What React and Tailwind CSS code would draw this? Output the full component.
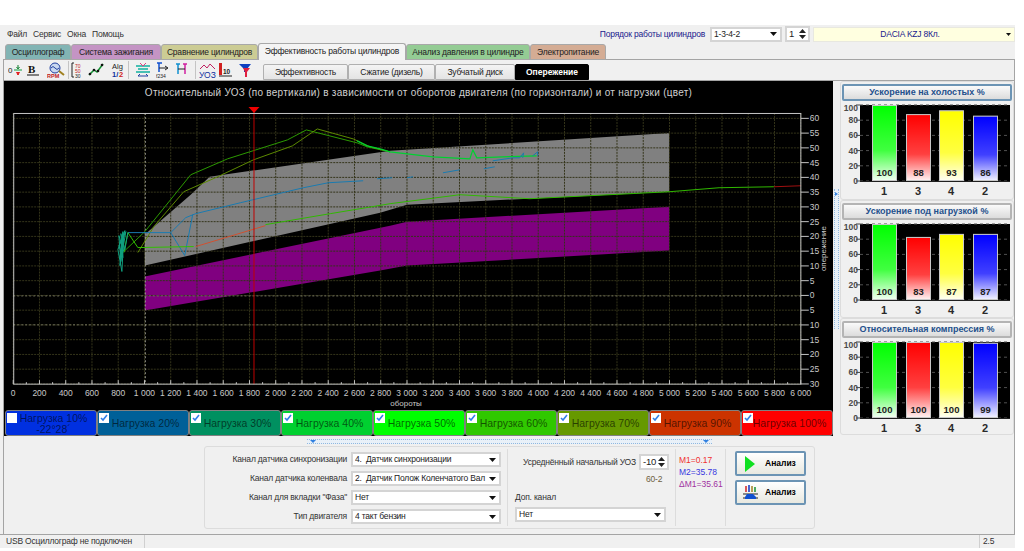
const FONT = "font-['Liberation_Sans',Arial,sans-serif]";

// ── Chart data, in page pixels ───────────────────────────────────────────────
const X0 = 12;
const PX_PER_200 = 26.33;
const Y_ZERO = 296;
const PX_PER_5 = 14.8;

const rpmTicks = Array.from({ length: 31 }, (_, i) => i * 200);
const advanceTicks = Array.from({ length: 19 }, (_, i) => 60 - i * 5);
const xOf = (rpm) => X0 + (rpm / 200) * PX_PER_200;
const yOf = (deg) => Y_ZERO - (deg / 5) * PX_PER_5;
const rpmLabel = (v) => (v >= 1000 ? `${Math.floor(v / 1000)} ${String(v % 1000).padStart(3, '0')}` : String(v));

const GREY_AREA = '144,235 190,195 209,177 390,151 670,133 670,192 407,205 380,213 144,266';
const PURPLE_AREA = '144,277 390,226 407,222 670,207 670,251 407,266 380,271 144,311';

const TRACES = [
  { c: '#2c9a00', p: '123,252 144,232 190,175 227,159 287,140 306,130 357,143 367,147 390,152' },
  { c: '#5c8a00', p: '137,253 153,227 183,192 217,177 253,160 292,146 317,129 353,139 370,147 390,152' },
  { c: '#00d030', p: '357,141 367,146 380,149 390,152 433,157 470,159 473,150 477,158 503,157 537,156', w: 1.2 },
  { c: '#1a7ab0', p: '127,233 170,233 185,218 195,214 240,203 303,188 328,183 363,181' },
  { c: '#1a7ab0', p: '170,233 184,256 192,215' },
  { c: '#1a7ab0', p: '377,179 392,178' },
  { c: '#1a7ab0', p: '407,178 413,177' },
  { c: '#1a7ab0', p: '443,173 460,170' },
  { c: '#1a7ab0', p: '484,169 495,167' },
  { c: '#1a7ab0', p: '493,161 513,158 520,158 524,153 523,158' },
  { c: '#1a7ab0', p: '533,156 538,152 538,156' },
  { c: '#30c000', p: '123,253 127,233 137,248 193,247' },
  { c: '#d05030', p: '195,247 265,226' },
  { c: '#30b800', p: '265,225 330,214 390,204 460,195 530,199 670,192 720,188 775,187' },
  { c: '#a01010', p: '775,187 802,186' },
];

const SQUIGGLE =
  '123,252 118,236 120,262 122,232 119,258 124,231 117,250 121,272 123,233 119,266 125,232 118,246 122,258 120,234 124,250 127,233';

const LOADS = [
  { label: 'Нагрузка 10%', sub: '-22°28´', bg: 'bg-[#0030e0]', empty: true },
  { label: 'Нагрузка 20%', bg: 'bg-[#006098]' },
  { label: 'Нагрузка 30%', bg: 'bg-[#009060]' },
  { label: 'Нагрузка 40%', bg: 'bg-[#00d030]' },
  { label: 'Нагрузка 50%', bg: 'bg-[#00ff00]' },
  { label: 'Нагрузка 60%', bg: 'bg-[#30c800]' },
  { label: 'Нагрузка 70%', bg: 'bg-[#669900]' },
  { label: 'Нагрузка 90%', bg: 'bg-[#cc3300]' },
  { label: 'Нагрузка 100%', bg: 'bg-[#ff0000]' },
];

const TABS = [
  { label: 'Осциллограф', cls: 'w-[66px] h-[16px] bg-[#82b4b4]' },
  { label: 'Система зажигания', cls: 'w-[90px] h-[16px] bg-[#c494c4]' },
  { label: 'Сравнение цилиндров', cls: 'w-[97px] h-[16px] bg-[#cccc94]' },
  { label: 'Эффективность работы цилиндров', cls: 'w-[148px] h-[17px] bg-[#f4f4f4] border-b-0 z-10 pb-[1px]' },
  { label: 'Анализ давления в цилиндре', cls: 'w-[124px] h-[16px] bg-[#94cc94]' },
  { label: 'Электропитание', cls: 'w-[76px] h-[16px] bg-[#d4ac94]' },
];

const SUB_TABS = [
  { label: 'Эффективность', w: 'w-[85px]' },
  { label: 'Сжатие (дизель)', w: 'w-[87px]' },
  { label: 'Зубчатый диск', w: 'w-[80px]' },
  { label: 'Опережение', w: 'w-[74px]', active: true },
];

const BARS = [
  { id: 1, color: '#00ff00', grad: 'g1' },
  { id: 3, color: '#ff0000', grad: 'g3' },
  { id: 4, color: '#ffff00', grad: 'g4' },
  { id: 2, color: '#0000ff', grad: 'g2' },
];

const CARDS = [
  { title: 'Ускорение на холостых %', values: [100, 88, 93, 86], focused: true, h: 'h-[119px]' },
  { title: 'Ускорение под нагрузкой %', values: [100, 83, 87, 87], h: 'h-[118px]' },
  { title: 'Относительная компрессия %', values: [100, 100, 100, 99], h: 'h-[117px]' },
];

// ── Small shared controls ────────────────────────────────────────────────────
function Arrow() {
  return (
    <svg width="7" height="4" viewBox="0 0 7 4" className="shrink-0">
      <path d="M0 0h7L3.5 4z" fill="#111" />
    </svg>
  );
}

function Combo({ text, className = '' }) {
  return (
    <div className={`flex items-center bg-white border-2 border-[#d4d4d4] h-[15px] pl-[2px] pr-[3px] text-[8.5px] tracking-[-0.2px] text-[#222] ${className}`}>
      <span className="flex-1 truncate leading-[11px] whitespace-pre">{text}</span>
      <Arrow />
    </div>
  );
}

function Spin({ value, className = '' }) {
  return (
    <div className={`flex items-center bg-white border-2 border-[#d4d4d4] h-[16px] px-[2px] text-[9.5px] text-[#222] ${className}`}>
      <span className="flex-1 leading-none">{value}</span>
      <svg width="7" height="10" viewBox="0 0 7 10">
        <path d="M0 4L3.500 0L7 4zM0 6h7L3.500 10z" fill="#222" />
      </svg>
    </div>
  );
}

// ── Toolbar icons ────────────────────────────────────────────────────────────
function ToolIcon({ w = 16, children }) {
  return (
    <svg width={w} height="16" viewBox={`0 0 ${w} 16`} className="shrink-0">
      {children}
    </svg>
  );
}

function Toolbar() {
  return (
    <div className="flex items-center w-[248px] pl-[4px] shrink-0">
      <ToolIcon w={15}>
        <text x="0" y="11" fontSize="8" fill="#222">0</text>
        <path d="M6 8h8" stroke="#10a040" />
        <path d="M10 3v3M8.500 5l1.500 2 1.500-2" stroke="#108030" fill="none" />
        <path d="M10 10v3M8.500 10l1.500 3 1.500-3" stroke="#e02020" fill="#e02020" />
      </ToolIcon>
      <div className="w-[4px]" />
      <ToolIcon w={13}>
        <text x="1" y="11" fontSize="11" fontWeight="700" fontFamily="Liberation Serif" fill="#111">B</text>
        <path d="M0 13h12" stroke="#111" />
      </ToolIcon>
      <div className="w-[7px]" />
      <ToolIcon w={18}>
        <circle cx="8" cy="6" r="5" fill="#c8d8f0" stroke="#2040a0" />
        <path d="M4 6q2-3 4 0t4 0" stroke="#2040a0" fill="none" />
        <path d="M12 9l5 4" stroke="#a08020" strokeWidth="2" />
        <text x="0" y="16" fontSize="5.500" fontWeight="700" fill="#c02020">RPM</text>
      </ToolIcon>
      <div className="w-px h-[18px] bg-[#c4c4c4] ml-[3px] mr-[3px]" />
      <ToolIcon w={13}>
        <path d="M3 1H1v14h2" stroke="#222" fill="none" />
        <text x="4" y="6" fontSize="5" fill="#c02020">70</text>
        <text x="4" y="11" fontSize="5" fill="#c02020">50</text>
        <text x="4" y="16" fontSize="5" fill="#222">30</text>
      </ToolIcon>
      <div className="w-[4px]" />
      <ToolIcon w={16}>
        <path d="M1 13L6 8l3 2 6-8" stroke="#109030" strokeWidth="1.500" fill="none" />
        <circle cx="2" cy="12" r="1.300" fill="#111" />
        <circle cx="6" cy="8" r="1.300" fill="#111" />
        <circle cx="10" cy="9" r="1.300" fill="#111" />
        <circle cx="14" cy="3" r="1.300" fill="#111" />
      </ToolIcon>
      <div className="w-[7px]" />
      <ToolIcon w={13}>
        <text x="1" y="7" fontSize="7.500" fill="#222">Alg</text>
        <text x="1" y="15" fontSize="7.500" fontWeight="700" fill="#1030a0">1/</text>
        <text x="8" y="15" fontSize="7.500" fontWeight="700" fill="#d02020">2</text>
      </ToolIcon>
      <div className="w-px h-[18px] bg-[#c4c4c4] ml-[4px] mr-[6px]" />
      <ToolIcon w={16}>
        <path d="M1 4h14M3 7h10M1 10h14" stroke="#10b0a0" strokeWidth="1.500" />
        <path d="M5 1l3 3 3-3" stroke="#e04080" fill="none" />
        <path d="M3 14h10M3 14l2-2M13 14l-2-2" stroke="#2040a0" fill="none" />
      </ToolIcon>
      <div className="w-[5px]" />
      <ToolIcon w={13}>
        <path d="M3 1v9M1 1h5" stroke="#1050d0" strokeWidth="1.500" />
        <path d="M3 6h8M9 4l3 2-3 2" stroke="#222" fill="none" />
        <text x="0" y="15.500" fontSize="5" fill="#222">f234</text>
      </ToolIcon>
      <div className="w-[7px]" />
      <ToolIcon w={13}>
        <path d="M1 2h4M3 2v10" stroke="#1090d0" strokeWidth="1.500" />
        <path d="M8 2h4M10 2v10" stroke="#d020a0" strokeWidth="1.500" />
        <path d="M3 7h7" stroke="#222" />
      </ToolIcon>
      <div className="w-px h-[18px] bg-[#c4c4c4] ml-[7px] mr-[3px]" />
      <ToolIcon w={17}>
        <path d="M1 7l4-4 3 3 3-4 5 5" stroke="#c02060" fill="none" />
        <text x="0" y="15.500" fontSize="8.500" fill="#1030a0">УОЗ</text>
      </ToolIcon>
      <div className="w-[2px]" />
      <ToolIcon w={15}>
        <rect x="1" y="1" width="3" height="12" fill="#d02020" />
        <path d="M1 14h13" stroke="#222" />
        <text x="5" y="12" fontSize="6.500" fontWeight="700" fill="#222">10</text>
      </ToolIcon>
      <div className="w-[6px]" />
      <ToolIcon w={13}>
        <path d="M0 2h12L8 7v3H5V7z" fill="#1040c0" />
        <path d="M4 6h7L8 10v5H6v-5z" fill="#e02040" />
      </ToolIcon>
    </div>
  );
}

// ── Main chart ───────────────────────────────────────────────────────────────
function AdvanceChart() {
  return (
    <svg width="829" height="306" viewBox="4 105 829 306" className="block" fontFamily="Liberation Sans">
      <polygon points={GREY_AREA} fill="#808080" />
      <polygon points={PURPLE_AREA} fill="#800080" />

      {rpmTicks.map((v) => (
        <line key={v} x1={xOf(v)} x2={xOf(v)} y1="113" y2="385" stroke="#34341a" strokeDasharray="2 1" />
      ))}
      {advanceTicks.map((v) => (
        <line key={v} x1="12" x2="802" y1={yOf(v)} y2={yOf(v)} stroke="#34341a" strokeDasharray="2 1" />
      ))}

      <line x1="12" x2="802" y1="296.500" y2="296.500" stroke="#70705c" strokeDasharray="2 2" />
      <line x1="12" x2="802" y1="325.500" y2="325.500" stroke="#70705c" strokeDasharray="2 2" />
      <line x1="144.500" x2="144.500" y1="113" y2="385" stroke="#9a9a90" strokeDasharray="2 2" />

      {TRACES.map((t, i) => (
        <polyline key={i} points={t.p} fill="none" stroke={t.c} strokeWidth={t.w || 1} />
      ))}
      <polyline points={SQUIGGLE} fill="none" stroke="#10a080" />

      <line x1="253.500" x2="253.500" y1="112" y2="385" stroke="#c00000" />
      <path d="M248 107h11l-5.500 6z" fill="#f00000" />

      <rect x="12.500" y="113.500" width="789.500" height="271.500" fill="none" stroke="#c4c4c4" />

      {rpmTicks.map((v) => (
        <g key={v}>
          <line x1={xOf(v)} x2={xOf(v)} y1="385" y2="381" stroke="#c4c4c4" />
          <line x1={xOf(v) + PX_PER_200 / 2} x2={xOf(v) + PX_PER_200 / 2} y1="385" y2="383" stroke={v < 6000 ? '#c4c4c4' : 'none'} />
          <text x={xOf(v)} y="397" fontSize="8.500" fill="#c8c8c8" textAnchor="middle">{rpmLabel(v)}</text>
        </g>
      ))}
      {advanceTicks.map((v) => (
        <g key={v}>
          <line x1="802" x2="810" y1={yOf(v)} y2={yOf(v)} stroke="#c4c4c4" />
          <text x="811" y={yOf(v) + 3} fontSize="8.500" fill="#c8c8c8">{Math.abs(v)}</text>
        </g>
      ))}
      <text x="406" y="407" fontSize="8" fill="#c8c8c8" textAnchor="middle">обороты</text>
      <text x="0" y="0" fontSize="8" fill="#c8c8c8" textAnchor="middle" transform="translate(827 249) rotate(-90)">опережение</text>
    </svg>
  );
}

function LoadButton({ label, sub, bg, empty }) {
  return (
    <div className={`relative w-[92px] h-[26px] rounded-[3px] border border-[#808080] flex flex-col items-center justify-center pl-[5px] text-[10.5px] leading-[10px] text-black/60 ${bg}`}>
      <span className="whitespace-nowrap">{label}</span>
      {sub && <span className="mt-[1px]">{sub}</span>}
      <div className="absolute left-[1px] top-[2px] w-[10px] h-[10px] bg-white flex items-center justify-center">
        {!empty && (
          <svg width="8" height="8" viewBox="0 0 8 8">
            <path d="M1 4l2 2 4-5" stroke="#3080e8" strokeWidth="1.600" fill="none" />
          </svg>
        )}
      </div>
    </div>
  );
}

// ── Right column bar charts ──────────────────────────────────────────────────
function BarChart({ values }) {
  const top = 2;
  const bottom = 78;
  const barX = [30, 64, 97, 131];
  return (
    <svg width="170" height="93" viewBox="0 0 170 93" className="block" fontFamily="Liberation Sans">
      <defs>
        {BARS.map((b) => (
          <linearGradient key={b.grad} id={b.grad} x1="0" y1="0" x2="0" y2="1">
            <stop offset="0" stopColor={b.color} />
            <stop offset="0.6" stopColor={b.color} stopOpacity="0.75" />
            <stop offset="1" stopColor={b.color} stopOpacity="0.05" />
          </linearGradient>
        ))}
      </defs>
      <rect x="18" y={top} width="150" height={bottom - top} fill="#000" />
      {[0, 20, 40, 60, 80, 100].map((v) => {
        const y = bottom - v * 0.76;
        return (
          <g key={v}>
            <line x1="18" x2="168" y1={y} y2={y} stroke="#505050" strokeDasharray="3 3" />
            <line x1="14" x2="18" y1={y} y2={y} stroke="#404040" />
            <text x="16" y={Math.max(y + 3, 8)} fontSize="8.500" fontWeight="700" fill="#4a4a4a" textAnchor="end">{v}</text>
          </g>
        );
      })}
      {BARS.map((b, i) => {
        const h = values[i] * 0.76;
        const x = barX[i];
        return (
          <g key={b.id}>
            <rect x={x + 0.500} y={bottom - h + 0.500} width="24" height={h - 1} fill="#fff" />
            <rect x={x + 0.500} y={bottom - h + 0.500} width="24" height={h - 1} fill={`url(#${b.grad})`} stroke="#c8c8c8" />
            <text x={x + 12.500} y={bottom - 5} fontSize="9.500" fontWeight="700" fill="#222" textAnchor="middle">{values[i]}</text>
            <text x={x + 12} y={bottom + 14} fontSize="11" fontWeight="700" fill="#2a2a2a" textAnchor="middle">{b.id}</text>
          </g>
        );
      })}
      <line x1="18" x2="168" y1={bottom + 0.500} y2={bottom + 0.500} stroke="#202020" />
    </svg>
  );
}

function ResultCard({ title, values, focused, h }) {
  return (
    <div className={`flex flex-col border border-[#dcdcdc] rounded-[3px] px-[1px] pt-[2px] ${h}`}>
      <div
        className={`h-[17px] rounded-[2px] border-2 flex items-center justify-center bg-linear-to-b from-[#fafafa] to-[#dcdcdc] text-[9px] font-bold text-[#24508c] ${
          focused ? 'border-[#6c94b4]' : 'border-[#b4b4b4]'
        }`}
      >
        {title}
      </div>
      <div className="mt-[2px]">
        <BarChart values={values} />
      </div>
    </div>
  );
}

// ── Bottom settings group ────────────────────────────────────────────────────
function SettingRow({ label, value }) {
  return (
    <div className="flex items-center h-[15px]">
      <span className="w-[139px] text-right whitespace-nowrap mr-[4px]">{label}</span>
      <Combo text={value} className="w-[150px]" />
    </div>
  );
}

function AnalyzeButton({ bars }) {
  return (
    <div className="flex items-center w-[71px] h-[25px] rounded-[2px] border-2 border-[#6c94b4] bg-linear-to-b from-white to-[#e8e8e0] text-[8.5px] font-bold text-black">
      <div className="w-[27px] flex justify-center">
        {bars ? (
          <svg width="16" height="16" viewBox="0 0 16 16">
            <path d="M3 1v6" stroke="#d02020" strokeWidth="1.500" />
            <path d="M6 0v7" stroke="#1030c0" strokeWidth="1.500" />
            <path d="M9 1v6" stroke="#a08020" strokeWidth="1.500" />
            <path d="M12 2v5" stroke="#109030" strokeWidth="1.500" />
            <path d="M0 9h15M0 13h15" stroke="#222" />
            <path d="M2 12l2-3h6l3 3v2H2z" fill="#1050d0" />
          </svg>
        ) : (
          <svg width="10" height="16" viewBox="0 0 10 16" className="-ml-[2px]">
            <path d="M0 0l10 8-10 8z" fill="#10e020" />
          </svg>
        )}
      </div>
      <span className="ml-[1px]">Анализ</span>
    </div>
  );
}

function SettingsGroup() {
  return (
    <div className="ml-[200px] mt-[2px] w-[611px] h-[83px] flex border border-[#dcdcdc] rounded-[3px] text-[8.5px] tracking-[-0.2px] text-[#333]">
      <div className="w-[303px] flex flex-col gap-[4px] pt-[3px] pl-[3px] border-r border-[#dcdcdc] my-[2px]">
        <SettingRow label="Канал датчика синхронизации" value="4.  Датчик синхронизации" />
        <SettingRow label="Канал датчика коленвала" value="2.  Датчик Полож Коленчатого Вал" />
        <SettingRow label={'Канал для вкладки "Фаза"'} value="Нет" />
        <SettingRow label="Тип двигателя" value="4 такт бензин" />
      </div>
      <div className="w-[168px] flex flex-col pl-[7px] border-r border-[#dcdcdc] my-[2px]">
        <div className="flex items-center mt-[5px] h-[16px]">
          <span className="w-[124px] pl-[8px] whitespace-nowrap">Усреднённый начальный УОЗ</span>
          <Spin value="-10" className="w-[30px]" />
        </div>
        <div className="h-[11px] mt-[4px] pl-[131px] leading-[11px] text-[#6e6040]">60-2</div>
        <div className="h-[11px] mt-[7px] leading-[11px]">Доп. канал</div>
        <Combo text="Нет" className="w-[151px] mt-[4px]" />
      </div>
      <div className="w-[50px] flex flex-col pl-[3px] pt-[5px] leading-[12px] text-[8.5px] tracking-normal border-r border-[#dcdcdc] my-[2px]">
        <span className="text-[#f03030]">M1=0.17</span>
        <span className="text-[#3838e0]">M2=35.78</span>
        <span className="text-[#a030a0]">ΔM1=35.61</span>
      </div>
      <div className="flex flex-col gap-[4px] pl-[9px] pt-[4px] tracking-normal">
        <AnalyzeButton />
        <AnalyzeButton bars />
      </div>
    </div>
  );
}

// ── Page ─────────────────────────────────────────────────────────────────────
export default function App() {
  return (
    <div className={`w-[1024px] h-[551px] bg-white overflow-hidden pt-[25px] ${FONT}`}>
      <div className="w-[1015px] h-[523px] bg-[#f0f0f0] flex flex-col">
        {/* menu + engine selectors */}
        <div className="h-[18px] flex items-center pl-[7px] text-[8.5px] tracking-[-0.2px] text-[#333] shrink-0">
          <span className="mr-[6px]">Файл</span>
          <span className="mr-[6px]">Сервис</span>
          <span className="mr-[6px]">Окна</span>
          <span>Помощь</span>
          <span className="ml-auto mr-[5px] text-[#20208c]">Порядок работы цилиндров</span>
          <Combo text="1-3-4-2" className="w-[72px] mr-[3px]" />
          <Spin value="1" className="w-[25px] mr-[3px]" />
          <div className="w-[202px] h-[15px] flex items-center bg-[#ffffe0] border border-[#e8e8e0] pr-[3px] text-[#20208c]">
            <span className="flex-1 text-center">DACIA KZJ 8Кл.</span>
            <svg width="5" height="3" viewBox="0 0 5 3"><path d="M0 0h5L2.500 3z" fill="#111" /></svg>
          </div>
        </div>

        {/* tabs */}
        <div className="h-[17px] flex items-end pl-[5px] shrink-0">
          {TABS.map((t) => (
            <div
              key={t.label}
              className={`flex items-center justify-center rounded-t-[3px] border border-[#a8a8a8] text-[8.5px] tracking-[-0.2px] text-[#222] whitespace-nowrap relative ${t.cls}`}
            >
              {t.label}
            </div>
          ))}
        </div>

        <div className="flex-1 flex flex-col -mt-[1px] ml-[3px] border-l border-t border-r border-[#a4a4a4] min-h-0">
          {/* toolbar + sub tabs */}
          <div className="h-[20px] flex items-center shrink-0">
            <Toolbar />
            <div className="flex items-end h-[20px] pl-[11px]">
              {SUB_TABS.map((t) => (
                <div
                  key={t.label}
                  className={`h-[16px] flex items-center justify-center rounded-t-[2px] border text-[8.5px] whitespace-nowrap ${t.w} ${
                    t.active ? 'bg-black border-black text-white font-bold' : 'bg-linear-to-b from-[#f4f4f4] to-[#e4e4e4] border-[#b0b0b0] text-[#222] tracking-[-0.2px]'
                  }`}
                >
                  {t.label}
                </div>
              ))}
            </div>
          </div>

          {/* chart + results */}
          <div className="h-[356px] flex shrink-0 border-t border-[#a4a4a4]">
            <div className="w-[829px] bg-black flex flex-col shrink-0">
              <div className="h-[24px] flex items-center justify-center text-[10px] tracking-[0.27px] text-[#d0d0d0] whitespace-nowrap">
                Относительный УОЗ (по вертикали) в зависимости от оборотов двигателя (по горизонтали) и от нагрузки (цвет)
              </div>
              <AdvanceChart />
              <div className="flex pl-[1px]">
                {LOADS.map((l) => (
                  <LoadButton key={l.label} {...l} />
                ))}
              </div>
            </div>
            <div className="w-[7px] flex items-center justify-center shrink-0">
              <div className="w-[5px] h-[140px] bg-[#e8f0f8] border-x border-dotted border-[#90b8e0] flex justify-center pt-[3px]">
                <div className="w-0 h-0 border-y-[2px] border-y-transparent border-l-[3px] border-l-[#3080e0]" />
              </div>
            </div>
            <div className="flex-1 flex flex-col pr-[1px]">
              {CARDS.map((c) => (
                <ResultCard key={c.title} {...c} />
              ))}
            </div>
          </div>

          {/* bottom settings */}
          <div className="flex-1 min-h-0 flex flex-col">
            <div className="ml-[303px] mt-[3px] w-[405px] h-[5px] bg-[#e8f0f8] border-y border-dotted border-[#90b8e0] flex justify-between px-[3px]">
              <div className="w-0 h-0 border-x-[3px] border-x-transparent border-t-[3px] border-t-[#3080e0]" />
              <div className="w-0 h-0 border-x-[3px] border-x-transparent border-t-[3px] border-t-[#3080e0]" />
            </div>
            <SettingsGroup />
          </div>
        </div>

        {/* status bar */}
        <div className="h-[14px] flex shrink-0 border-t border-[#a4a4a4] text-[8.5px] tracking-[-0.2px] text-[#333]">
          <div className="w-[145px] pl-[6px] leading-[13px] border-r border-[#d0d0d0] whitespace-nowrap">USB Осциллограф не подключен</div>
          <div className="flex-1 border-r border-[#d0d0d0]" />
          <div className="w-[35px] pl-[3px] leading-[13px]">2.5</div>
        </div>
      </div>
    </div>
  );
}
